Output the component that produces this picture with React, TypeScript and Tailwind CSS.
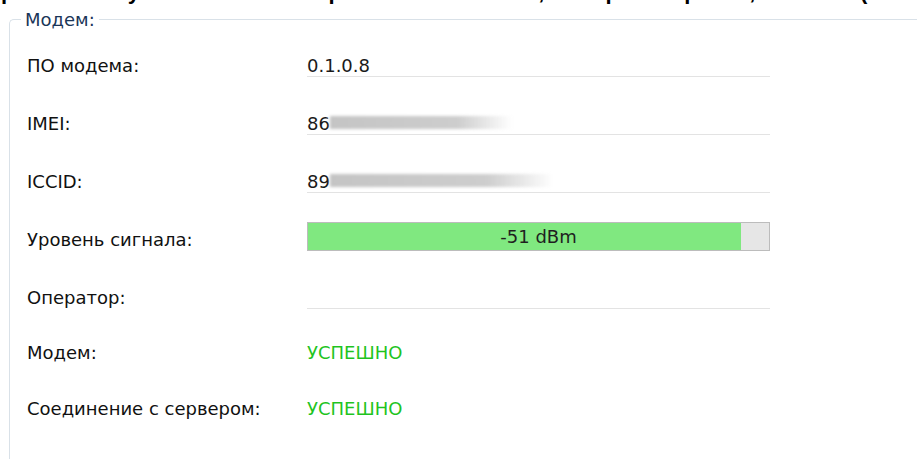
import type { ReactNode } from "react";

type Row = { label: string; h: string; value: ReactNode };

const FONT = "font-['DejaVu_Sans','Noto_Sans',sans-serif]";

function Masked({ prefix, width }: { prefix: string; width: string }) {
  return (
    <span className="flex items-end">
      <span>{prefix}</span>
      <span
        className={`${width} mb-[5px] h-[13px] blur-[1.5px] bg-[linear-gradient(90deg,#c4c4c4_0%,#cdcdcd_70%,rgba(230,230,230,0)_100%)]`}
      />
    </span>
  );
}

function SignalBar({ dbm, pct }: { dbm: number; pct: number }) {
  return (
    <div className="relative h-[29px] w-full border border-[#bcbcbc] bg-[#e6e6e6]">
      <div className="h-full bg-[#80e880]" style={{ width: `${pct}%` }} />
      <div className="absolute inset-0 flex items-center justify-center text-[#1f1f1f]">
        {dbm} dBm
      </div>
    </div>
  );
}

const rows: Row[] = [
  { label: "ПО модема:", h: "h-[57px]", value: "0.1.0.8" },
  { label: "IMEI:", h: "h-[58px]", value: <Masked prefix="86" width="w-[182px]" /> },
  { label: "ICCID:", h: "h-[58px]", value: <Masked prefix="89" width="w-[224px]" /> },
  { label: "Уровень сигнала:", h: "h-[58px]", value: null },
  { label: "Оператор:", h: "h-[58px]", value: "" },
];

const status = [
  { label: "Модем:", h: "h-[55px]" },
  { label: "Соединение с сервером:", h: "h-[56px]" },
];

export default function App() {
  return (
    <div className={`h-[459px] w-[917px] overflow-hidden bg-white text-[18px] text-[#111] ${FONT}`}>
      {/* tail of the heading line above the group box */}
      <div className="h-[6px] overflow-hidden">
        <div className="-mt-[19px] whitespace-nowrap pl-[1px] font-['Liberation_Sans',sans-serif] text-[22px] font-bold leading-[22px] tracking-[-1.6px] text-black">
          работает все утилиты и камни его ровно в тех же местах, как та рама ва ребята, все окна и (
        </div>
      </div>

      <div className="relative ml-[9px] mt-[13px] h-[460px] rounded-tl-[5px] border-l border-t border-[#d9e1e8]">
        <span className="absolute -top-[11px] left-[11px] bg-white px-[4px] leading-[21px] text-[#1a3558]">
          Модем:
        </span>

        <div className="pl-[17px]">
          {rows.map((r, i) => (
            <div key={r.label} className={`flex items-end ${r.h}`}>
              <div className="w-[280px] shrink-0 pb-[1px] leading-[21px]">{r.label}</div>
              {i === 3 ? (
                <div className="w-[463px]">
                  <SignalBar dbm={-51} pct={94} />
                </div>
              ) : (
                <div className="h-[22px] w-[463px] border-b border-[#e3e3e3] leading-[21px] text-[#1a1a1a]">
                  {r.value}
                </div>
              )}
            </div>
          ))}

          {status.map((s) => (
            <div key={s.label} className={`flex items-end ${s.h}`}>
              <div className="w-[280px] shrink-0 pb-[1px] leading-[21px]">{s.label}</div>
              <div className="pb-[1px] leading-[21px] text-[#1fc41f]">УСПЕШНО</div>
            </div>
          ))}
        </div>
      </div>
    </div>
  );
}
